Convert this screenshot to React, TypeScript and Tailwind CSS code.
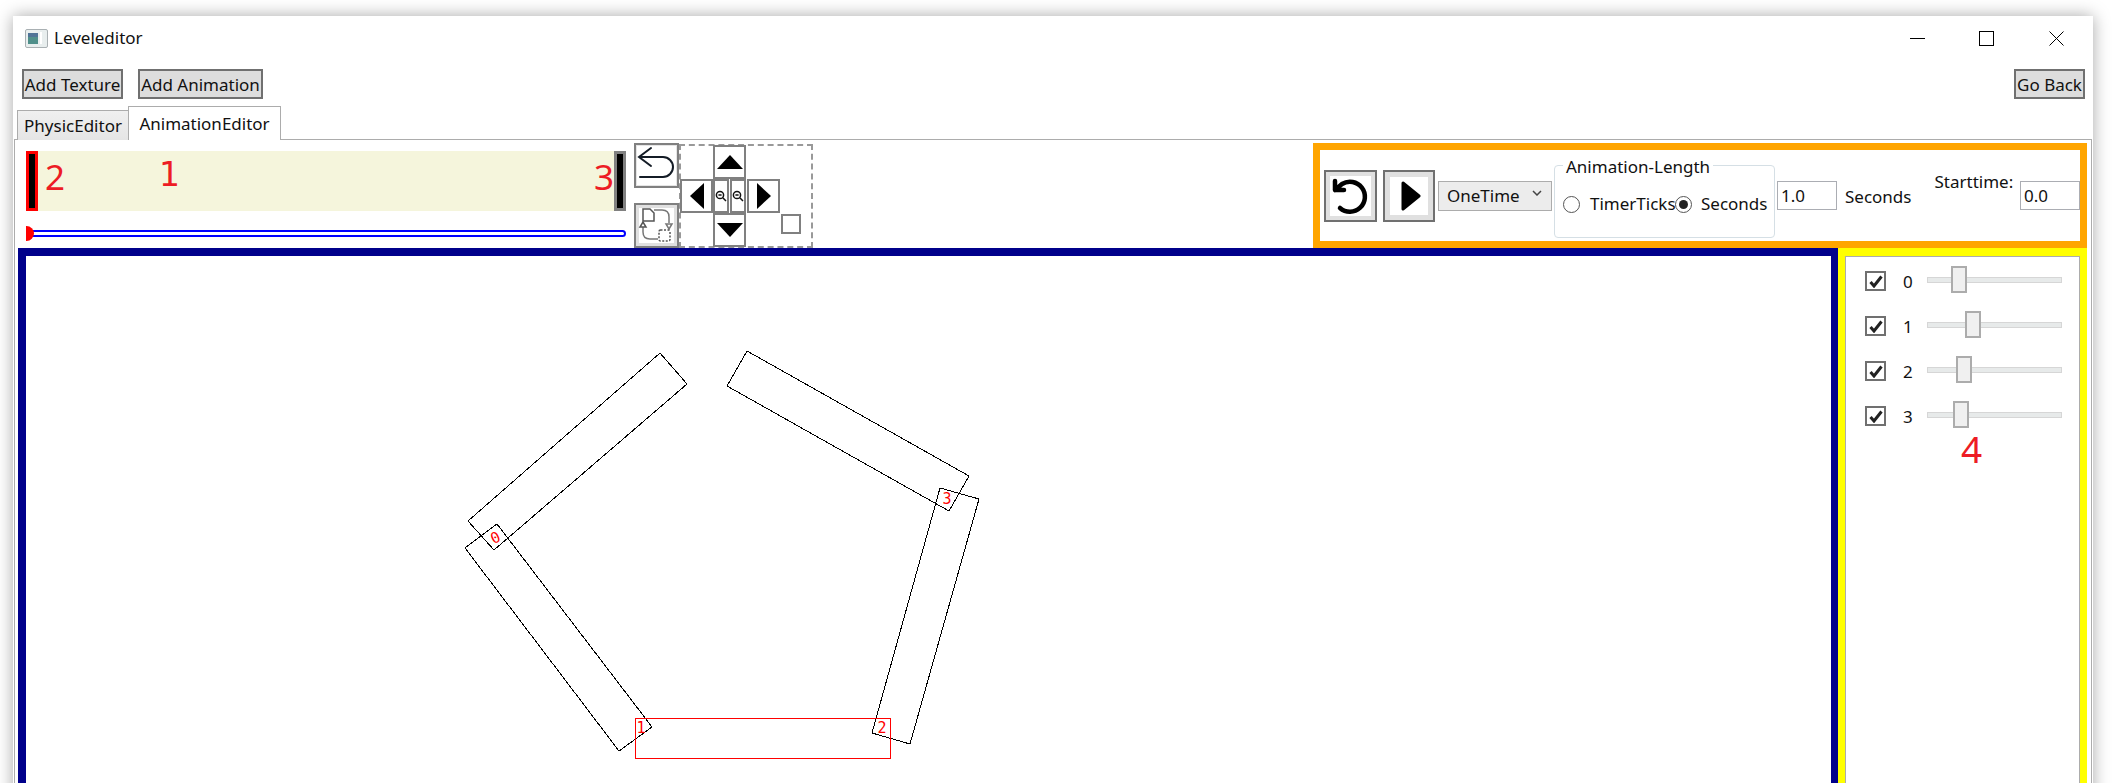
import React from 'react';

const font = { fontFamily: '"Noto Sans", sans-serif' };

const channels = [
  { id: '0', thumb: 'ml-[23px]' },
  { id: '1', thumb: 'ml-[37px]' },
  { id: '2', thumb: 'ml-[28px]' },
  { id: '3', thumb: 'ml-[25px]' },
];

const bars = [
  '660,353 687,384 494,550 468,521',
  '497,524 652,727 619,751 465,548',
  '940,488 979,499 910,744 872,733',
  '747,351 969,476 949,511 727,386',
];

const labels = [
  { text: '0', x: 495, y: 543, rotate: -25 },
  { text: '1', x: 641, y: 733, rotate: 0 },
  { text: '2', x: 882, y: 733, rotate: 0 },
  { text: '3', x: 947, y: 504, rotate: 0 },
];

const PadButton = ({ className, children }: { className: string; children?: React.ReactNode }) => (
  <div className={`flex items-center justify-center border-2 border-[#808080] bg-white ${className}`}>{children}</div>
);

const Triangle = ({ points }: { points: string }) => (
  <svg width="26" height="26" viewBox="0 0 26 26">
    <polygon points={points} fill="#000" />
  </svg>
);

const ZoomGlass = () => (
  <svg width="12" height="12" viewBox="0 0 12 12" fill="none" stroke="#111" strokeWidth="1.5">
    <circle cx="5" cy="5" r="3.6" />
    <path d="M3.4 5h3.2M7.8 7.8L11 11" />
  </svg>
);

const App: React.FC = () => {
  return (
    <div className="h-[783px] overflow-hidden bg-white pl-[13px] pt-[16px]" style={font}>
      <div className="h-[800px] w-[2080px] overflow-hidden bg-white text-[#111] shadow-[0_0_16px_rgba(0,0,0,0.35)]">
        {/* title bar */}
        <div className="flex h-[44px] items-center pl-[12px]">
          <svg width="23" height="19" viewBox="0 0 23 19">
            <rect x="0.5" y="0.5" width="22" height="18" rx="1.5" fill="#e8eeee" stroke="#a9b0b3" />
            <rect x="3" y="4" width="10" height="11" fill="#4f8f8a" />
            <rect x="3" y="4" width="10" height="4" fill="#4f7396" />
            <rect x="15" y="3" width="2" height="12" fill="#fff" />
          </svg>
          <span className="ml-[6px] text-[17px]">Leveleditor</span>
          <div className="flex-grow" />
          <div className="h-px w-[15px] bg-black" />
          <div className="ml-[54px] h-[15px] w-[15px] border border-black" />
          <svg className="ml-[55px] mr-[29px]" width="15" height="15" viewBox="0 0 15 15" stroke="#000" fill="none">
            <path d="M0.5 0.5l14 14M14.5 0.5l-14 14" />
          </svg>
        </div>

        {/* toolbar */}
        <div className="mt-[9px] flex h-[30px] pl-[9px] text-[17px]">
          <button className="w-[101px] border-2 border-[#707070] bg-[#dddddd] leading-none">Add Texture</button>
          <button className="ml-[15px] w-[125px] border-2 border-[#707070] bg-[#dddddd] leading-none">Add Animation</button>
          <button className="ml-auto mr-[8px] w-[71px] border-2 border-[#707070] bg-[#dddddd] leading-none">Go Back</button>
        </div>

        {/* tabs */}
        <div className="relative z-10 mt-[7px] flex h-[34px] items-end pl-[4px] text-[17px]">
          <div className="flex h-[30px] w-[112px] items-center justify-center border border-b-0 border-[#acacac] bg-linear-to-b from-[#f0f0f0] to-[#e5e5e5]">PhysicEditor</div>
          <div className="-ml-px flex h-[34px] w-[153px] items-center justify-center border border-b-0 border-[#acacac] bg-white">AnimationEditor</div>
        </div>

        <div className="-mt-px ml-px mr-px h-[700px] border border-[#acacac]">
          <div className="flex h-[108px]">
            {/* timeline */}
            <div className="ml-[11px] w-[600px] pt-[11px]">
              <div className="relative flex h-[60px] justify-between bg-[#f5f5dc]">
                <div className="w-[12px] border-[3px] border-[#ff0000] bg-black" />
                <div className="w-[12px] border-[3px] border-[#808080] bg-black" />
                <span className="absolute left-[19px] top-[2px] text-[35px] leading-[48px] text-[#ed1c24]">2</span>
                <span className="absolute left-[133px] top-[0px] font-['DejaVu_Sans'] text-[33px] leading-[48px] text-[#ed1c24]">1</span>
                <span className="absolute left-[568px] top-[2px] text-[35px] leading-[48px] text-[#ed1c24]">3</span>
              </div>
              <div className="relative ml-[4px] mt-[19px] h-[7px] rounded-full border-2 border-[#0000ff]">
                <div className="absolute -left-[6px] -top-[6px] h-[15px] w-[8px] rounded-r-full bg-[#ff0000]" />
              </div>
            </div>

            <div className="ml-[8px] flex w-[45px] flex-col pt-[3px]">
              <div className="flex h-[45px] items-center justify-center border-2 border-[#808080] bg-white shadow-[inset_0_0_0_1px_#e5e5e5]">
                <svg width="41" height="41" viewBox="0 0 41 41" fill="none" stroke="#141c26" strokeWidth="2" strokeLinecap="round">
                  <path d="M15 3L3 12l12 9M3 12h24a10 10 0 0 1 0 20H4" />
                </svg>
              </div>
              <div className="mt-[15px] flex h-[45px] items-center justify-center border-2 border-[#808080] bg-white shadow-[inset_0_0_0_3px_#e0e0e0]">
                <svg width="41" height="41" viewBox="0 0 41 41" fill="none" stroke="#777777" strokeWidth="1.5">
                  <path d="M7 4h7l4 4v8H7z" fill="#fff" stroke="#555" />
                  <path d="M18 5h8q7 0 7 7v6" />
                  <path d="M30 19h6l-3 5z" />
                  <rect x="23" y="25" width="11" height="11" rx="1.5" stroke="#555" strokeDasharray="2 1.5" />
                  <path d="M22 34h-8q-7 0-7-7v-5" />
                  <path d="M4 22h6l-3-5z" stroke="#555" />
                </svg>
              </div>
            </div>

            {/* move and zoom pad */}
            <div className="mt-[4px] h-[104px] w-[134px] border-2 border-dashed border-[#999999]">
              <div className="-m-px grid grid-cols-[33px_33px_34px_20px] grid-rows-[34px_34px_34px]">
                <PadButton className="col-start-2">
                  <Triangle points="13,6 26,20 0,20" />
                </PadButton>
                <PadButton className="col-start-1 row-start-2">
                  <Triangle points="20,0 20,26 6,13" />
                </PadButton>
                <div className="col-start-2 row-start-2 flex gap-[1px]">
                  <PadButton className="flex-1"><ZoomGlass /></PadButton>
                  <PadButton className="flex-1"><ZoomGlass /></PadButton>
                </div>
                <PadButton className="col-start-3 row-start-2 ml-[1px]">
                  <Triangle points="6,0 6,26 20,13" />
                </PadButton>
                <PadButton className="col-start-2 row-start-3">
                  <Triangle points="0,6 26,6 13,20" />
                </PadButton>
                <div className="col-start-4 row-start-3 ml-[1px] mt-[1px] h-[20px] w-[20px] border-2 border-[#808080]" />
              </div>
            </div>

            {/* playback */}
            <div className="ml-auto mr-[4px] mt-[3px] flex h-[105px] w-[774px] items-start border-[7px] border-[#ffa500] text-[17px]">
              <div className="ml-[4px] mt-[20px] flex h-[52px] w-[53px] items-center justify-center border-2 border-[#707070] bg-white shadow-[inset_0_0_0_4px_#e0e0e0]">
                <svg width="49" height="48" viewBox="2 2 49 48" fill="none" stroke="#000" strokeWidth="4.5" strokeLinecap="round" strokeLinejoin="round">
                  <path d="M11 11v9h9M11 20l7-6A15 15 0 1 1 16 38" />
                </svg>
              </div>
              <div className="ml-[6px] mt-[20px] flex h-[52px] w-[52px] items-center justify-center border-2 border-[#707070] bg-white shadow-[inset_0_0_0_5px_#e0e0e0]">
                <svg className="ml-[3px]" width="20" height="30" viewBox="0 0 20 30"><path d="M2 2L18 15L2 28z" fill="#000" stroke="#000" strokeWidth="3" strokeLinejoin="round" /></svg>
              </div>
              <div className="ml-[3px] mt-[31px] flex h-[30px] w-[114px] items-center border border-[#acacac] bg-[#ececec] pl-[8px]">
                <span>OneTime</span>
                <svg className="ml-[12px] -mt-[6px]" width="10" height="6" viewBox="0 0 10 6" fill="none" stroke="#444" strokeWidth="1.5"><path d="M1 1l4 4 4-4" /></svg>
              </div>
              <div className="relative ml-[2px] mt-[15px] h-[73px] w-[221px] rounded-[4px] border border-[#d5dfe5]">
                <span className="absolute -top-[11px] left-[8px] bg-white px-[3px] leading-[24px]">Animation-Length</span>
                <div className="flex items-center pl-[8px] pt-[26px] leading-[24px]">
                  <div className="h-[17px] w-[17px] rounded-full border border-[#555] bg-white" />
                  <span className="ml-[10px] w-[85px]">TimerTicks</span>
                  <div className="flex h-[17px] w-[17px] items-center justify-center rounded-full border border-[#555] bg-white">
                    <div className="h-[9px] w-[9px] rounded-full bg-[#222]" />
                  </div>
                  <span className="ml-[9px]">Seconds</span>
                </div>
              </div>
              <div className="ml-[2px] mt-[31px] flex h-[29px] w-[60px] items-center border border-[#abadb3] pl-[3px]">1.0</div>
              <span className="ml-[8px] mt-[35px] leading-[24px]">Seconds</span>
              <span className="ml-[23px] mt-[20px] leading-[24px]">Starttime:</span>
              <div className="ml-auto mt-[31px] flex h-[29px] w-[60px] items-center border border-[#abadb3] pl-[3px]">0.0</div>
            </div>
          </div>

          <div className="ml-[3px] mr-[4px] flex">
            {/* bar canvas */}
            <div className="relative h-[560px] w-[1820px] border-8 border-r-[7px] border-[#00008b] bg-white">
              <svg className="absolute inset-0 h-full w-full" viewBox="26 256 1805 544" fill="none">
                {bars.map((points) => (
                  <polygon key={points} points={points} stroke="#000" shapeRendering="crispEdges" />
                ))}
                <rect x="635.5" y="718.5" width="255" height="40" stroke="#ff0000" shapeRendering="crispEdges" />
                {labels.map((l) => (
                  <text
                    key={l.text}
                    x={l.x}
                    y={l.y}
                    fontSize="15"
                    fill="#ff0000"
                    textAnchor="middle"
                    fontFamily='"DejaVu Sans Mono", monospace'
                    transform={l.rotate ? `rotate(${l.rotate} ${l.x} ${l.y - 6})` : undefined}
                  >
                    {l.text}
                  </text>
                ))}
              </svg>
            </div>

            {/* channel list */}
            <div className="h-[560px] w-[249px] border-[7px] border-t-8 border-[#ffff00]">
              <div className="h-full border border-[#acacac] bg-white pl-[19px] pt-[9px]">
                <div className="flex flex-col gap-[18px]">
                  {channels.map((c) => (
                    <div key={c.id} className="flex h-[27px] items-center text-[17px]">
                      <div className="mt-[3px] flex h-[20px] w-[21px] items-center justify-center border-2 border-[#707070]">
                        <svg width="14" height="13" viewBox="0 0 14 13" fill="none" stroke="#222" strokeWidth="3"><path d="M1.5 7l3.5 4L12.5 1.5" /></svg>
                      </div>
                      <span className="ml-[17px] mt-[4px] w-[24px]">{c.id}</span>
                      <div className="relative flex h-[6px] w-[135px] items-center border border-[#d6d6d6] bg-[#e7eaea]">
                        <div className={`h-[27px] w-[16px] shrink-0 border-2 border-[#acacac] bg-[#f0f0f0] ${c.thumb}`} />
                      </div>
                    </div>
                  ))}
                </div>
                <div className="ml-[96px] mt-[-3px] text-[37px] leading-[48px] text-[#ed1c24]">4</div>
              </div>
            </div>
          </div>
        </div>
      </div>
    </div>
  );
};

export default App;
